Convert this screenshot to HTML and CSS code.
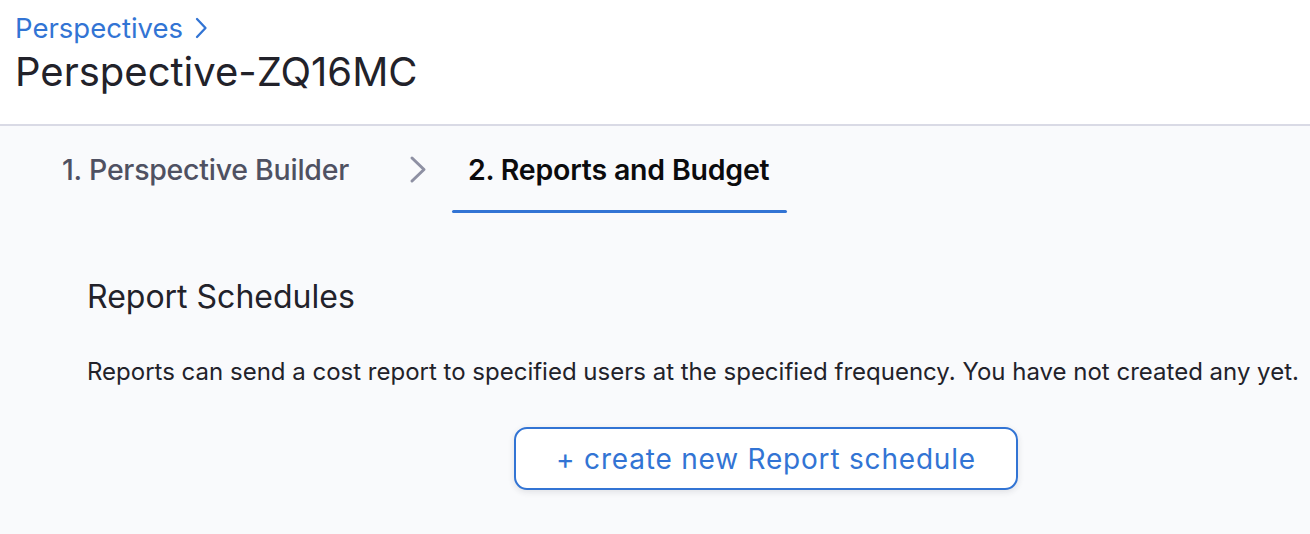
FILE: index.html
```html
<!DOCTYPE html>
<html>
<head>
<meta charset="utf-8">
<link rel="stylesheet" href="styles.css">
</head>
<body>
<header class="page-header">
  <a class="breadcrumb" href="#">Perspectives
    <svg class="crumb-chev" width="16" height="24" viewBox="0 0 16 24"><path d="M4 3 L12.5 12 L4 21" fill="none" stroke="currentColor" stroke-width="2.3" stroke-linecap="round" stroke-linejoin="round"/></svg>
  </a>
  <h1 class="title">Perspective-ZQ16MC</h1>
</header>
<main class="content">
  <nav class="tabs">
    <div class="tab">1. Perspective Builder</div>
    <svg class="tab-chev" width="22" height="33" viewBox="0 0 22 33"><path d="M5 5 L17 16.5 L5 28" fill="none" stroke="currentColor" stroke-width="3" stroke-linecap="round" stroke-linejoin="round"/></svg>
    <div class="tab active">2. Reports and Budget</div>
  </nav>
  <section class="section">
    <h2 class="section-title">Report Schedules</h2>
    <p class="section-text">Reports can send a cost report to specified users at the specified frequency. You have not created any yet.</p>
    <div class="actions">
      <button class="create-btn">+ create new Report schedule</button>
    </div>
  </section>
</main>
</body>
</html>
```
FILE: styles.css
```css
* { box-sizing: border-box; }
html, body { margin: 0; padding: 0; }
body {
  font-family: Inter, "Noto Sans", sans-serif;
  background: #f9fafc;
  color: #22222a;
  width: 1310px;
  height: 534px;
  overflow: hidden;
}
.page-header {
  background: #ffffff;
  height: 126px;
  border-bottom: 2px solid #d9dae5;
  padding: 11px 15px 0;
}
.breadcrumb {
  display: inline-flex;
  align-items: center;
  gap: 10px;
  color: #3274d4;
  text-decoration: none;
  font-size: 27.5px;
  line-height: 34px;
}
.crumb-chev { color: #3274d4; }
.title {
  margin: 4px 0 0;
  font-weight: 400;
  font-size: 40px;
  line-height: 46px;
  color: #22222a;
}
.tabs {
  display: flex;
  align-items: center;
  padding-left: 62px;
  height: 86px;
}
.tab {
  font-size: 28.5px;
  font-weight: 500;
  color: #4f5162;
  letter-spacing: -0.25px;
  height: 86px;
  display: flex;
  align-items: center;
  position: relative;
}
.tab-chev { color: #8e90a3; margin: 0 39px 0 58px; }
.tab.active {
  color: #0b0b0d;
  font-weight: 600;
  letter-spacing: -0.2px;
}
.tab.active::after {
  content: "";
  position: absolute;
  left: -16px;
  right: -18px;
  bottom: -1px;
  height: 3px;
  border-radius: 2px;
  background: #3274d4;
}
.section {
  padding: 67px 0 0 87px;
}
.section-title {
  margin: 0;
  font-weight: 400;
  font-size: 32px;
  line-height: 36px;
  color: #22222a;
}
.section-text {
  margin: 42px 0 0;
  font-size: 24px;
  line-height: 30px;
  color: #22222a;
  white-space: nowrap;
}
.actions {
  display: flex;
  padding-left: 427px;
  margin-top: 40px;
}
.create-btn {
  width: 504px;
  height: 63px;
  border: 2px solid #3274d4;
  border-radius: 13px;
  background: #ffffff;
  color: #3274d4;
  font-family: Inter, "Noto Sans", sans-serif;
  font-size: 28px;
  letter-spacing: 0.8px;
  box-shadow: 0 2px 6px rgba(40, 41, 61, 0.12);
  cursor: pointer;
}
```
